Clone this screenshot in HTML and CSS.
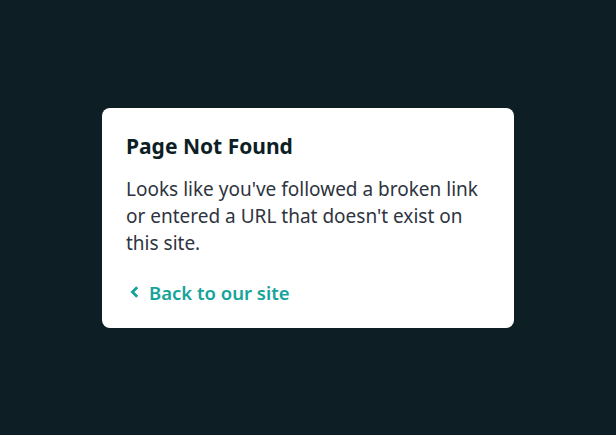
FILE: index.html
```html
<!DOCTYPE html>
<html lang="en">
<head>
    <meta charset="UTF-8">
    <meta name="viewport" content="width=device-width, initial-scale=1.0">
    <title>Page Not Found</title>
    <link rel="stylesheet" href="styles.css">
</head>
<body>
    <main class="card">
        <h1>Page Not Found</h1>
        <p>Looks like you've followed a broken link or entered a URL that doesn't exist on this site.</p>
        <a class="back" href="/">
            <svg class="chevron" viewBox="0 0 8 12" width="8" height="12" aria-hidden="true">
                <path d="M6.2 2.2 L2.4 6 L6.2 9.8" fill="none" stroke="currentColor" stroke-width="2.8" stroke-linecap="square"/>
            </svg>
            <span>Back to our site</span>
        </a>
    </main>
</body>
</html>
```

FILE: styles.css
```css
:root {
    --bg: #0e1e25;
    --card: #ffffff;
    --heading: #0e1e25;
    --text: #2e3440;
    --link: #15a49b;
}

* {
    box-sizing: border-box;
}

body {
    margin: 0;
    height: 100vh;
    display: flex;
    align-items: center;
    justify-content: center;
    background: var(--bg);
    font-family: "Noto Sans", "Open Sans", sans-serif;
    color: var(--text);
}

/* 卡片 */
.card {
    width: 412px;
    padding: 24px;
    background: var(--card);
    border-radius: 8px;
}

.card h1 {
    margin: 0;
    font-size: 21px;
    line-height: 28px;
    font-weight: 700;
    color: var(--heading);
}

.card p {
    margin: 16px 0 24px;
    font-size: 19px;
    line-height: 27px;
}

.back {
    display: flex;
    align-items: center;
    gap: 11px;
    height: 23px;
    color: var(--link);
    font-size: 18.5px;
    font-weight: 600;
    text-decoration: none;
}

.chevron {
    margin-left: 4px;
    flex-shrink: 0;
}
```
